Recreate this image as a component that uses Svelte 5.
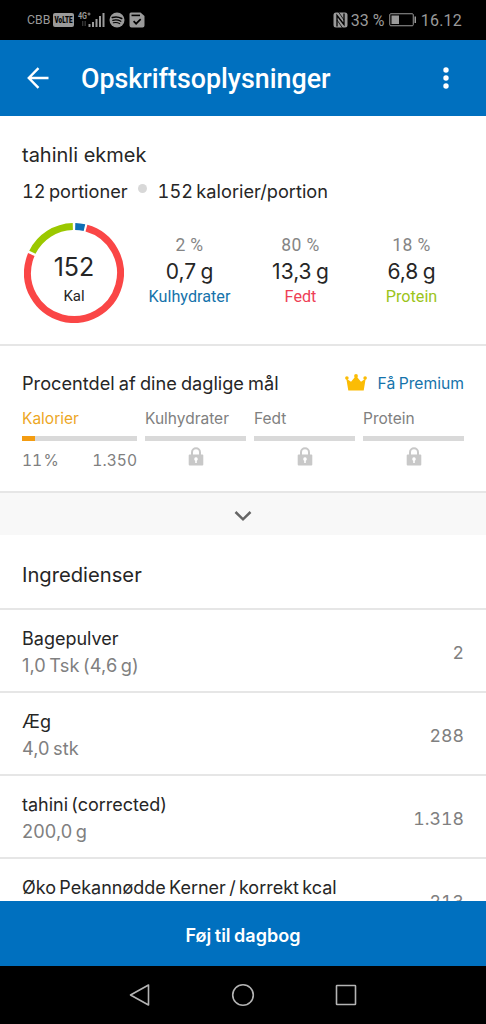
<script>
  const macros = [
    { id: 'carbs', label: 'Kulhydrater', percent: '2 %', grams: '0,7 g' },
    { id: 'fat', label: 'Fedt', percent: '80 %', grams: '13,3 g' },
    { id: 'protein', label: 'Protein', percent: '18 %', grams: '6,8 g' },
  ];

  // start and sweep in degrees, clockwise from the top
  const segments = [
    { id: 'carbs', start: 1.5, sweep: 11.5 },
    { id: 'fat', start: 15.5, sweep: 278 },
    { id: 'protein', start: 296.5, sweep: 62 },
  ];

  const calorieGoal = { percent: 11, total: '1.350' };
  const lockedGoals = ['Kulhydrater', 'Fedt', 'Protein'];

  const ingredients = [
    { name: 'Bagepulver', amount: '1,0 Tsk (4,6 g)', kcal: '2' },
    { name: 'Æg', amount: '4,0 stk', kcal: '288' },
    { name: 'tahini (corrected)', amount: '200,0 g', kcal: '1.318' },
    { name: 'Øko Pekannødde Kerner / korrekt kcal', amount: '', kcal: '213' },
  ];
</script>

<div class="screen">
  <!-- Status bar -->
  <div class="status-bar">
    <div class="status-left">
      <span class="carrier">CBB</span>
      <svg class="volte" viewBox="0 0 21 14">
        <rect width="21" height="14" rx="2" fill="#9a9a9a" />
        <text x="1.5" y="10.4" textLength="18" lengthAdjust="spacingAndGlyphs">VoLTE</text>
      </svg>
      <svg class="signal" viewBox="0 0 28 18" fill="#9a9a9a">
        <text x="0" y="7.5" class="net" textLength="9" lengthAdjust="spacingAndGlyphs">4G</text>
        <path d="M9.500 3h3M11 1.500v3" stroke="#9a9a9a" />
        <rect x="4" y="10" width="1.400" height="5" opacity="0.35" />
        <rect x="6.500" y="10" width="1.400" height="5" opacity="0.35" />
        <rect x="10.500" y="13" width="2" height="3" />
        <rect x="14" y="11" width="2" height="5" />
        <rect x="17.500" y="8" width="2" height="8" />
        <rect x="21" y="5" width="2" height="11" />
        <rect x="24.500" y="2" width="2" height="14" />
      </svg>
      <svg class="spotify" viewBox="0 0 16 16">
        <circle cx="8" cy="8" r="7.500" fill="#9a9a9a" />
        <g fill="none" stroke="#000" stroke-linecap="round">
          <path d="M3.300 5.600c3-.9 6.600-.6 9.400.9" stroke-width="1.600" />
          <path d="M3.800 8.300c2.700-.8 5.700-.4 8 .9" stroke-width="1.300" />
          <path d="M4.300 10.800c2.300-.6 4.600-.3 6.400.8" stroke-width="1.100" />
        </g>
      </svg>
      <svg class="task" viewBox="0 0 16 16">
        <path d="M2 .5h9.500L15.500 4v9.500a2 2 0 0 1-2 2h-11a2 2 0 0 1-2-2V2A1.500 1.500 0 0 1 2 .5z" fill="#9a9a9a" />
        <path d="M2.500 3.400h8.500" stroke="#000" stroke-width="1.600" />
        <path d="M4.600 9.200l2.500 2.500 4.600-4.600" fill="none" stroke="#000" stroke-width="1.700" />
      </svg>
    </div>
    <div class="status-right">
      <svg class="nfc" viewBox="0 0 15 16">
        <rect x=".5" y=".5" width="14" height="15" rx="2.500" fill="#9a9a9a" />
        <path d="M4 14.500V3.500l7 9V1.500" fill="none" stroke="#000" stroke-width="1.300" />
        <path d="M5.500 0l5.500 8M4 8l5.500 8" stroke="#000" stroke-width=".8" />
      </svg>
      <span class="battery-text">33 %</span>
      <svg class="battery" viewBox="0 0 28 14">
        <rect x=".75" y=".75" width="23.500" height="12" rx="1" fill="none" stroke="#9a9a9a" />
        <rect x="2.500" y="2.500" width="7.500" height="8.500" fill="#9a9a9a" />
        <rect x="25.500" y="3.500" width="1.500" height="6.500" fill="#9a9a9a" />
      </svg>
      <span class="clock">16.12</span>
    </div>
  </div>

  <!-- App bar -->
  <header class="app-bar">
    <button class="icon-btn" aria-label="Tilbage">
      <svg class="back" viewBox="0 0 22 22" fill="none" stroke="#fff" stroke-width="2.400">
        <path d="M21.500 11H2M11.500 1.200L1.800 11l9.700 9.800" />
      </svg>
    </button>
    <h1>Opskriftsoplysninger</h1>
    <button class="icon-btn menu" aria-label="Menu">
      <svg viewBox="0 0 6 22" fill="#fff">
        <circle cx="3" cy="3" r="2.700" />
        <circle cx="3" cy="11" r="2.700" />
        <circle cx="3" cy="19" r="2.700" />
      </svg>
    </button>
  </header>

  <main>
    <section class="summary">
      <h2>tahinli ekmek</h2>
      <p class="servings">
        <span>12 portioner</span>
        <i class="dot"></i>
        <span>152 kalorier/portion</span>
      </p>
      <div class="nutrition">
        <div class="donut">
          <svg viewBox="0 0 100 100">
            {#each segments as seg}
              <circle
                class="arc {seg.id}"
                cx="50"
                cy="50"
                r="46.500"
                pathLength="360"
                stroke-dasharray="{seg.sweep} {360 - seg.sweep}"
                transform="rotate({seg.start - 90} 50 50)"
              />
            {/each}
          </svg>
          <div class="donut-label">
            <strong>152</strong>
            <span>Kal</span>
          </div>
        </div>
        <div class="macros">
          {#each macros as macro}
            <div class="macro {macro.id}">
              <span class="macro-percent">{macro.percent}</span>
              <span class="macro-grams">{macro.grams}</span>
              <span class="macro-label">{macro.label}</span>
            </div>
          {/each}
        </div>
      </div>
    </section>

    <section class="goals">
      <div class="goals-head">
        <h3>Procentdel af dine daglige mål</h3>
        <a class="premium" href="#premium">
          <svg viewBox="0 0 22 17" fill="#fbbc05">
            <path d="M1.300 4.500l4.700 3.300L10 3h2l4 4.800L20.700 4.500 18.700 16.500H3.300z" />
            <circle cx="1.900" cy="4" r="1.800" />
            <circle cx="11" cy="2" r="1.900" />
            <circle cx="20.100" cy="4" r="1.800" />
          </svg>
          <span>Få Premium</span>
        </a>
      </div>
      <div class="goal-list">
        <div class="goal calories">
          <span class="goal-label">Kalorier</span>
          <div class="bar"><div class="fill" style="width: {calorieGoal.percent}%"></div></div>
          <div class="goal-values">
            <span>{calorieGoal.percent} %</span>
            <span>{calorieGoal.total}</span>
          </div>
        </div>
        {#each lockedGoals as label}
          <div class="goal">
            <span class="goal-label">{label}</span>
            <div class="bar"></div>
            <svg class="lock" viewBox="0 0 16 19">
              <path d="M4 8V5.300a4 4 0 0 1 8 0V8" fill="none" stroke="#c8c8c8" stroke-width="2" />
              <rect x=".7" y="7.500" width="14.600" height="11" rx="1" fill="#c8c8c8" />
              <path d="M8 10.300a1.800 1.800 0 0 1 .8 3.400V16H7.200v-2.300A1.800 1.800 0 0 1 8 10.300z" fill="#fff" />
            </svg>
          </div>
        {/each}
      </div>
    </section>

    <button class="expander" aria-label="Vis mere">
      <svg viewBox="0 0 18 12" fill="none" stroke="#666" stroke-width="2.500">
        <path d="M1.500 2L9 9.300 16.500 2" />
      </svg>
    </button>

    <section class="ingredients">
      <h3>Ingredienser</h3>
      {#each ingredients as item}
        <div class="ingredient">
          <div class="ingredient-text">
            <span class="name">{item.name}</span>
            <span class="amount">{item.amount}</span>
          </div>
          <span class="kcal">{item.kcal}</span>
        </div>
      {/each}
    </section>
  </main>

  <button class="add-btn">Føj til dagbog</button>

  <!-- Android navigation -->
  <nav class="nav-bar">
    <svg viewBox="0 0 24 24"><path d="M20.500 2v20L2.500 12z" /></svg>
    <svg viewBox="0 0 24 24"><circle cx="12" cy="12" r="10.300" /></svg>
    <svg viewBox="0 0 24 24"><rect x="2.500" y="2.500" width="19" height="19" rx=".5" /></svg>
  </nav>
</div>

<style>
  :global(body) {
    margin: 0;
    background: #000;
  }

  .screen {
    width: 486px;
    height: 1024px;
    display: flex;
    flex-direction: column;
    overflow: hidden;
    background: #fff;
    color: #262626;
    font-family: Inter, 'Liberation Sans', sans-serif;
  }

  h1,
  h2,
  h3,
  p {
    margin: 0;
    font-weight: 400;
  }

  button {
    border: none;
    padding: 0;
    background: none;
    font-family: inherit;
  }

  svg {
    display: block;
    flex-shrink: 0;
  }

  /* ===== Status bar ===== */
  .status-bar {
    height: 40px;
    flex-shrink: 0;
    display: flex;
    align-items: center;
    justify-content: space-between;
    padding: 0 24px 0 27px;
    background: #000;
    color: #9a9a9a;
    font-family: Roboto, sans-serif;
  }

  .status-left,
  .status-right {
    display: flex;
    align-items: center;
  }

  .carrier {
    width: 26px;
    font-size: 12.3px;
  }

  .volte {
    width: 21px;
    height: 14px;
    overflow: visible;
  }

  .volte text {
    font-size: 9px;
    font-weight: 900;
  }

  .signal {
    width: 28px;
    height: 18px;
    margin-left: 4px;
    overflow: visible;
  }

  .net {
    font-size: 8.5px;
    font-weight: 700;
  }

  .spotify {
    width: 16px;
    height: 16px;
    margin-left: 3px;
  }

  .task {
    width: 16px;
    height: 16px;
    margin-left: 4px;
  }

  .nfc {
    width: 15px;
    height: 16px;
    margin-right: 3px;
  }

  .battery-text {
    width: 38px;
    font-size: 16px;
    white-space: nowrap;
  }

  .battery {
    width: 28px;
    height: 14px;
  }

  .clock {
    margin-left: 4px;
    font-size: 16px;
    letter-spacing: 0.2px;
  }

  /* ===== App bar ===== */
  .app-bar {
    height: 76px;
    flex-shrink: 0;
    display: flex;
    align-items: center;
    padding: 0 37px 0 27px;
    box-sizing: border-box;
    background: #0070bf;
    color: #fff;
  }

  .back {
    width: 22px;
    height: 22px;
  }

  .app-bar h1 {
    flex: 1;
    margin-left: 32px;
    padding-top: 2px;
    font-family: Roboto, sans-serif;
    font-size: 26.8px;
    font-weight: 500;
  }

  .menu svg {
    width: 6px;
    height: 22px;
  }

  /* ===== Summary ===== */
  main {
    flex: 1;
    min-height: 0;
    overflow: hidden;
  }

  .summary {
    height: 230px;
    box-sizing: border-box;
    padding: 26px 22px 0;
    border-bottom: 2px solid #e6e6e6;
  }

  .summary h2 {
    line-height: 26px;
    font-size: 20px;
  }

  .servings {
    display: flex;
    align-items: center;
    margin-top: 11px;
    font-size: 18.2px;
    line-height: 24px;
    word-spacing: -1.5px;
    font-variant-numeric: tabular-nums;
  }

  .dot {
    width: 9px;
    height: 9px;
    margin: -5px 10.5px 0;
    border-radius: 50%;
    background: #d8d8d8;
  }

  .nutrition {
    display: flex;
    margin-top: 20px;
    padding-left: 2px;
  }

  .donut {
    display: grid;
    flex-shrink: 0;
    width: 100px;
    height: 100px;
  }

  .donut > * {
    grid-area: 1 / 1;
  }

  .arc {
    fill: none;
    stroke-width: 7;
  }

  .arc.carbs {
    stroke: #0f6fb5;
  }

  .arc.fat {
    stroke: #fa4646;
  }

  .arc.protein {
    stroke: #9bc800;
  }

  .donut-label {
    display: flex;
    flex-direction: column;
    align-items: center;
    padding-top: 29px;
  }

  .donut-label strong {
    font-size: 25px;
    font-weight: 400;
    line-height: 30px;
  }

  .donut-label span {
    font-family: Roboto, sans-serif;
    font-size: 15px;
    line-height: 28px;
  }

  .macros {
    display: grid;
    grid-template-columns: repeat(3, 111px);
    margin-left: 10px;
    padding-top: 10px;
  }

  .macro {
    display: flex;
    flex-direction: column;
    align-items: center;
  }

  .macro-percent {
    font-family: Roboto, sans-serif;
    font-size: 17.5px;
    line-height: 25px;
    letter-spacing: 0.4px;
    color: #858585;
  }

  .macro-grams {
    font-size: 21px;
    line-height: 27px;
    word-spacing: -1.5px;
  }

  .macro-label {
    font-family: Roboto, sans-serif;
    font-size: 16.2px;
    line-height: 23px;
  }

  .macro.carbs .macro-label {
    color: #1573ab;
  }

  .macro.fat .macro-label {
    color: #ee4056;
  }

  .macro.protein .macro-label {
    color: #9bc41a;
  }

  /* ===== Daily goals ===== */
  .goals {
    height: 147px;
    box-sizing: border-box;
    padding: 24px 22px 0;
    border-bottom: 2px solid #e6e6e6;
  }

  .goals-head {
    display: flex;
    align-items: center;
    justify-content: space-between;
    height: 26px;
  }

  .goals-head h3 {
    font-size: 18.2px;
    word-spacing: -1px;
    white-space: nowrap;
  }

  .premium {
    display: flex;
    align-items: center;
    gap: 11px;
    color: #1573ab;
    font-size: 15.7px;
    word-spacing: -1px;
    text-decoration: none;
    white-space: nowrap;
  }

  .premium svg {
    width: 22px;
    height: 17px;
    margin-top: -2px;
  }

  .goal-list {
    display: grid;
    grid-template-columns: 115px repeat(3, 101px);
    column-gap: 8px;
    margin-top: 11px;
    color: #808080;
    font-size: 15.5px;
  }

  .goal-label {
    display: block;
    line-height: 24px;
  }

  .calories .goal-label {
    color: #eda71f;
  }

  .bar {
    height: 5px;
    margin-top: 5px;
    background: #d9d9d9;
  }

  .fill {
    height: 100%;
    background: #f39c12;
  }

  .goal-values {
    display: flex;
    justify-content: space-between;
    margin-top: 8px;
    line-height: 24px;
    font-size: 15.6px;
    word-spacing: -3px;
    font-variant-numeric: tabular-nums;
  }

  .lock {
    width: 16px;
    height: 19px;
    margin: 6px auto 0;
  }

  .expander {
    width: 100%;
    height: 42px;
    display: flex;
    align-items: center;
    justify-content: center;
    background: #f8f8f8;
  }

  .expander svg {
    width: 18px;
    height: 12px;
    margin-top: 3px;
  }

  /* ===== Ingredients ===== */
  .ingredients h3 {
    height: 73px;
    line-height: 79px;
    padding-left: 22px;
    font-size: 20.2px;
  }

  .ingredient {
    height: 83px;
    box-sizing: border-box;
    display: flex;
    justify-content: space-between;
    padding: 16px 22px 0;
    border-top: 2px solid #e6e6e6;
  }

  .ingredient-text {
    display: flex;
    flex-direction: column;
  }

  .name {
    font-size: 18px;
    line-height: 26px;
    word-spacing: -1.8px;
  }

  .amount {
    font-size: 18.2px;
    line-height: 27px;
    word-spacing: -1.8px;
    letter-spacing: 0.1px;
    color: #808080;
  }

  .kcal {
    padding-top: 13px;
    font-size: 17.7px;
    line-height: 28px;
    color: #808080;
    font-variant-numeric: tabular-nums;
  }

  /* ===== Footer ===== */
  .add-btn {
    height: 65px;
    flex-shrink: 0;
    padding-top: 3px;
    background: #0070bf;
    color: #fff;
    font-size: 18px;
    font-weight: 600;
    word-spacing: -1px;
  }

  .nav-bar {
    height: 58px;
    flex-shrink: 0;
    display: flex;
    align-items: center;
    justify-content: center;
    gap: 79px;
    background: #000;
  }

  .nav-bar svg {
    width: 24px;
    height: 24px;
    fill: none;
    stroke: #b4b4b4;
    stroke-width: 1.6;
    stroke-linejoin: round;
  }
</style>
